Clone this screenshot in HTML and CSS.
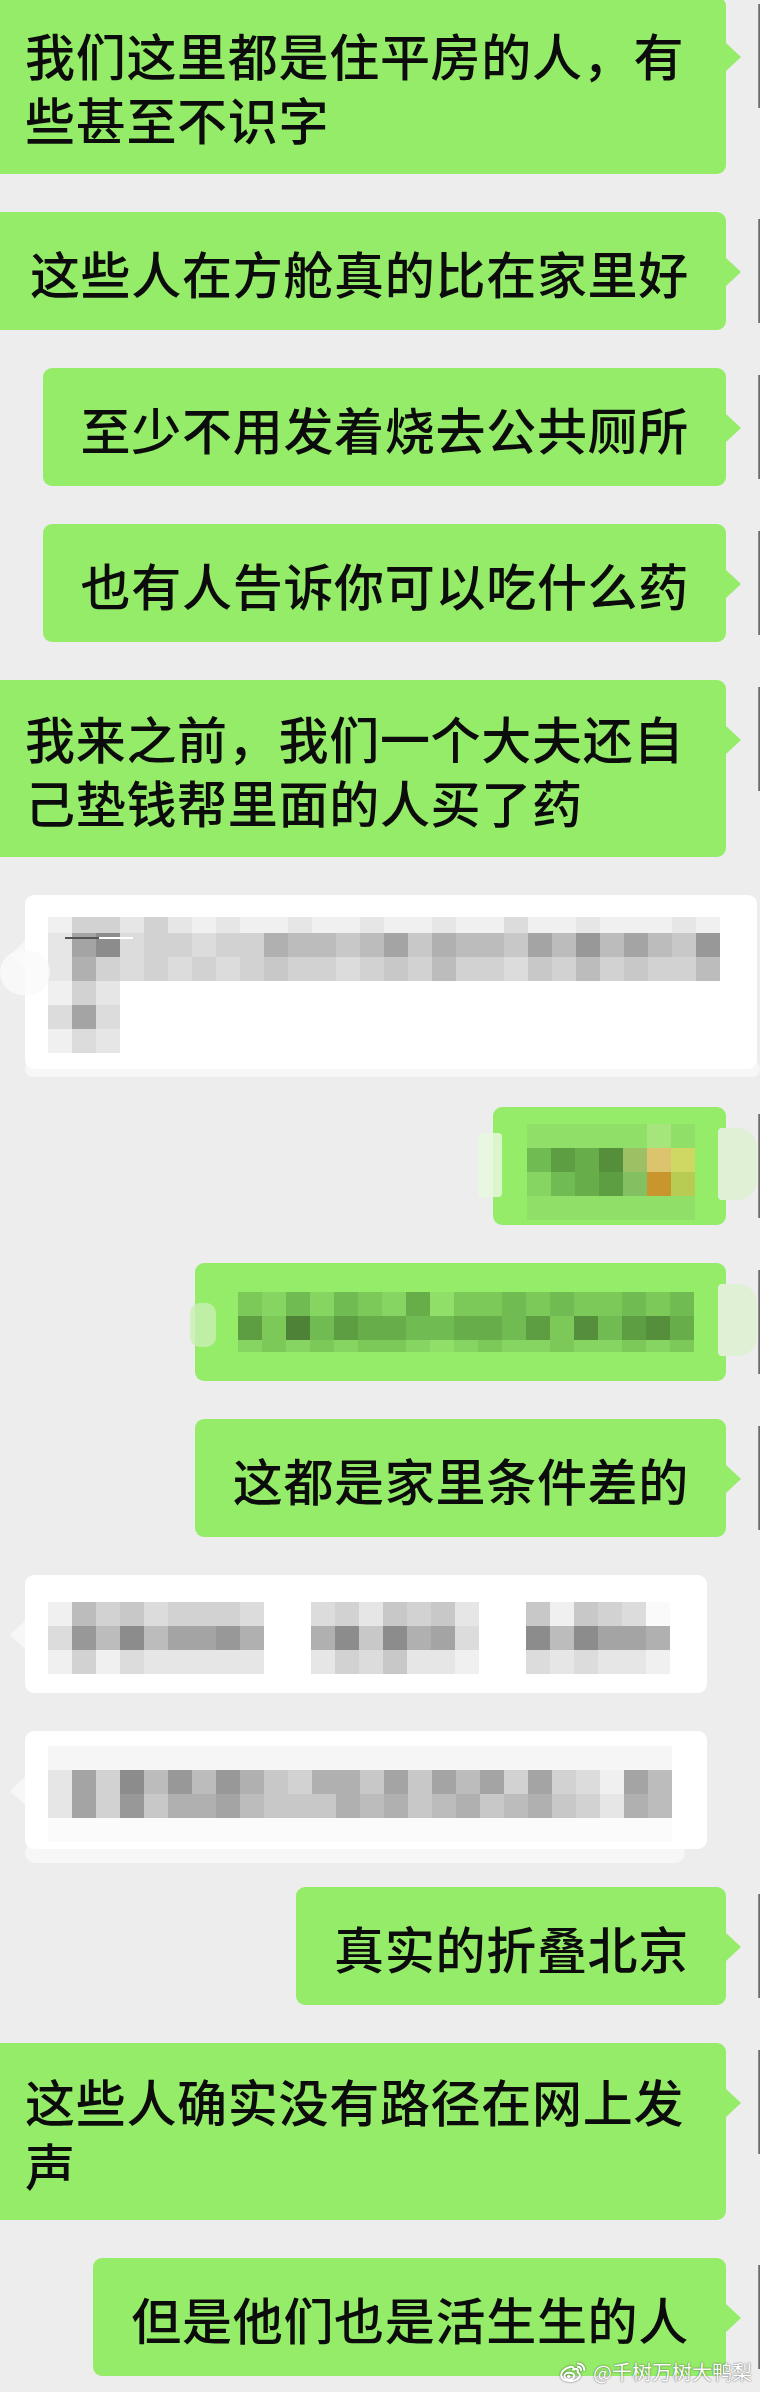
FILE: index.html
```html
<!DOCTYPE html>
<html lang="zh-CN">
<head>
<meta charset="utf-8">
<title>聊天记录</title>
<link rel="stylesheet" href="styles.css">
</head>
<body>
<div class="chat">
  <div class="row me"><div class="bubble green">我们这里都是住平房的人，有些甚至不识字</div><i class="avatar"></i></div>
  <div class="row me"><div class="bubble green">这些人在方舱真的比在家里好</div><i class="avatar"></i></div>
  <div class="row me"><div class="bubble green">至少不用发着烧去公共厕所</div><i class="avatar"></i></div>
  <div class="row me"><div class="bubble green">也有人告诉你可以吃什么药</div><i class="avatar"></i></div>
  <div class="row me"><div class="bubble green">我来之前，我们一个大夫还自己垫钱帮里面的人买了药</div><i class="avatar"></i></div>

  <div class="row them">
    <div class="bubble white mos-b6">
      <div class="mos">
        <div class="r h16"><i class="c1"></i><i class="c4"></i><i class="c4"></i><i class="c2"></i><i class="c4"></i><i class="c2"></i><i class="c1"></i><i class="c2"></i><i class="c1"></i><i class="c1"></i><i class="c2"></i><i class="c1"></i><i class="c1"></i><i class="c2"></i><i class="c1"></i><i class="c1"></i><i class="c2"></i><i class="c1"></i><i class="c1"></i><i class="c3"></i><i class="c1"></i><i class="c1"></i><i class="c2"></i><i class="c1"></i><i class="c1"></i><i class="c1"></i><i class="c2"></i><i class="c1"></i></div>
        <div class="r"><i class="c2"></i><i class="c8"></i><i class="ca"></i><i class="c3"></i><i class="c4"></i><i class="c4"></i><i class="c3"></i><i class="c4"></i><i class="c4"></i><i class="c7"></i><i class="c6"></i><i class="c6"></i><i class="c5"></i><i class="c6"></i><i class="c8"></i><i class="c5"></i><i class="c7"></i><i class="c6"></i><i class="c6"></i><i class="c5"></i><i class="c8"></i><i class="c6"></i><i class="c9"></i><i class="c6"></i><i class="c8"></i><i class="c6"></i><i class="c5"></i><i class="c9"></i></div>
        <div class="r"><i class="c2"></i><i class="c7"></i><i class="c4"></i><i class="c3"></i><i class="c4"></i><i class="c3"></i><i class="c4"></i><i class="c3"></i><i class="c4"></i><i class="c5"></i><i class="c4"></i><i class="c4"></i><i class="c3"></i><i class="c4"></i><i class="c5"></i><i class="c4"></i><i class="c6"></i><i class="c4"></i><i class="c4"></i><i class="c3"></i><i class="c5"></i><i class="c4"></i><i class="c6"></i><i class="c4"></i><i class="c5"></i><i class="c4"></i><i class="c4"></i><i class="c6"></i></div>
        <div class="r"><i class="c1"></i><i class="c4"></i><i class="c2"></i></div>
        <div class="r"><i class="c3"></i><i class="c8"></i><i class="c3"></i></div>
        <div class="r"><i class="c1"></i><i class="c3"></i><i class="c2"></i></div>
      </div>
      <b class="scratch"></b>
      <b class="smudge sm-b6-left"></b>
      <b class="smudge sm-b6-bottom"></b>
    </div>
  </div>

  <div class="row me">
    <div class="bubble green mos-b7">
      <div class="mos">
        <div class="r"><i class="gA"></i><i class="gA"></i><i class="gA"></i><i class="gA"></i><i class="gA"></i><i class="sL3"></i><i class="gA"></i></div>
        <div class="r"><i class="gD"></i><i class="gF"></i><i class="gE"></i><i class="gG"></i><i class="sL1"></i><i class="sY1"></i><i class="sY2"></i></div>
        <div class="r"><i class="gB"></i><i class="gD"></i><i class="gE"></i><i class="gF"></i><i class="sL2"></i><i class="sO"></i><i class="sY3"></i></div>
        <div class="r"><i class="gA"></i><i class="gA"></i><i class="gA"></i><i class="gA"></i><i class="gA"></i><i class="gA"></i><i class="gA"></i></div>
      </div>
      <b class="smudge sm-b7-left"></b>
      <b class="smudge sm-right"></b>
    </div>
    <i class="avatar"></i>
  </div>

  <div class="row me">
    <div class="bubble green mos-b8">
      <div class="mos">
        <div class="r"><i class="gC"></i><i class="gB"></i><i class="gD"></i><i class="gB"></i><i class="gD"></i><i class="gC"></i><i class="gB"></i><i class="gE"></i><i class="gA"></i><i class="gC"></i><i class="gC"></i><i class="gD"></i><i class="gC"></i><i class="gD"></i><i class="gC"></i><i class="gC"></i><i class="gD"></i><i class="gC"></i><i class="gD"></i></div>
        <div class="r"><i class="gF"></i><i class="gC"></i><i class="gH"></i><i class="gD"></i><i class="gF"></i><i class="gE"></i><i class="gE"></i><i class="gD"></i><i class="gD"></i><i class="gE"></i><i class="gE"></i><i class="gD"></i><i class="gF"></i><i class="gC"></i><i class="gG"></i><i class="gD"></i><i class="gF"></i><i class="gG"></i><i class="gE"></i></div>
        <div class="r h12"><i class="gB"></i><i class="gC"></i><i class="gB"></i><i class="gC"></i><i class="gB"></i><i class="gC"></i><i class="gC"></i><i class="gB"></i><i class="gA"></i><i class="gB"></i><i class="gC"></i><i class="gB"></i><i class="gB"></i><i class="gC"></i><i class="gB"></i><i class="gB"></i><i class="gC"></i><i class="gB"></i><i class="gC"></i></div>
      </div>
      <b class="smudge sm-b8-left"></b>
      <b class="smudge sm-right"></b>
    </div>
    <i class="avatar"></i>
  </div>

  <div class="row me"><div class="bubble green">这都是家里条件差的</div><i class="avatar"></i></div>

  <div class="row them">
    <div class="bubble white mos-b10">
      <div class="groups">
        <div class="mos">
          <div class="r"><i class="c1"></i><i class="c6"></i><i class="c4"></i><i class="c5"></i><i class="c3"></i><i class="c4"></i><i class="c4"></i><i class="c4"></i><i class="c3"></i></div>
          <div class="r"><i class="c3"></i><i class="c9"></i><i class="c6"></i><i class="ca"></i><i class="c6"></i><i class="c8"></i><i class="c8"></i><i class="c9"></i><i class="c7"></i></div>
          <div class="r"><i class="c1"></i><i class="c4"></i><i class="c1"></i><i class="c3"></i><i class="c2"></i><i class="c2"></i><i class="c2"></i><i class="c2"></i><i class="c2"></i></div>
        </div>
        <div class="mos">
          <div class="r"><i class="c3"></i><i class="c4"></i><i class="c2"></i><i class="c5"></i><i class="c4"></i><i class="c5"></i><i class="c2"></i></div>
          <div class="r"><i class="c7"></i><i class="ca"></i><i class="c5"></i><i class="ca"></i><i class="c7"></i><i class="c8"></i><i class="c3"></i></div>
          <div class="r"><i class="c2"></i><i class="c4"></i><i class="c3"></i><i class="c5"></i><i class="c2"></i><i class="c2"></i><i class="c1"></i></div>
        </div>
        <div class="mos">
          <div class="r"><i class="c5"></i><i class="c1"></i><i class="c5"></i><i class="c4"></i><i class="c3"></i><i class="c0"></i></div>
          <div class="r"><i class="ca"></i><i class="c6"></i><i class="ca"></i><i class="c8"></i><i class="c8"></i><i class="c7"></i></div>
          <div class="r"><i class="c3"></i><i class="c2"></i><i class="c3"></i><i class="c2"></i><i class="c2"></i><i class="c1"></i></div>
        </div>
      </div>
    </div>
  </div>

  <div class="row them">
    <div class="bubble white mos-b11">
      <div class="mos">
        <div class="band"></div>
        <div class="r"><i class="c2"></i><i class="c8"></i><i class="c4"></i><i class="ca"></i><i class="c6"></i><i class="c9"></i><i class="c6"></i><i class="c9"></i><i class="c7"></i><i class="c5"></i><i class="c4"></i><i class="c7"></i><i class="c7"></i><i class="c5"></i><i class="c8"></i><i class="c5"></i><i class="c8"></i><i class="c6"></i><i class="c8"></i><i class="c4"></i><i class="c8"></i><i class="c4"></i><i class="c3"></i><i class="c1"></i><i class="c8"></i><i class="c6"></i></div>
        <div class="r"><i class="c2"></i><i class="c8"></i><i class="c4"></i><i class="c9"></i><i class="c5"></i><i class="c7"></i><i class="c7"></i><i class="c8"></i><i class="c6"></i><i class="c5"></i><i class="c5"></i><i class="c5"></i><i class="c7"></i><i class="c6"></i><i class="c7"></i><i class="c5"></i><i class="c6"></i><i class="c7"></i><i class="c5"></i><i class="c6"></i><i class="c7"></i><i class="c5"></i><i class="c4"></i><i class="c2"></i><i class="c7"></i><i class="c6"></i></div>
        <div class="band faint"></div>
      </div>
      <b class="smudge sm-b11-bottom"></b>
    </div>
  </div>

  <div class="row me"><div class="bubble green">真实的折叠北京</div><i class="avatar"></i></div>
  <div class="row me"><div class="bubble green">这些人确实没有路径在网上发声</div><i class="avatar"></i></div>
  <div class="row me"><div class="bubble green">但是他们也是活生生的人</div><i class="avatar"></i></div>
</div>

<div class="watermark">
  <svg class="weibo" width="28" height="22" viewBox="0 0 30 24" aria-hidden="true">
    <g fill="none" stroke="#fff" stroke-width="2.2" stroke-linecap="round" stroke-linejoin="round">
      <path d="M12 6.5C6.5 7.5 1.5 12 2.2 16.2C3 21 10 23 16.2 21.2C22 19.4 24 15.4 21.2 13.3C20.3 12.7 19.8 12.2 20.2 10.8C20.7 8.8 18.2 8 15.2 9.4C16.2 6.8 14.6 6 12 6.5Z"/>
      <ellipse cx="11" cy="16.4" rx="5.4" ry="3.7"/>
      <path d="M20.5 2.8A7 7 0 0 1 27.4 9.8"/>
      <path d="M20.4 6.4A3.4 3.4 0 0 1 23.8 9.8"/>
    </g>
    <circle cx="10.2" cy="16.8" r="1.7" fill="#fff"/>
  </svg>
  <span>@千树万树大鸭梨</span>
</div>
</body>
</html>
```

FILE: styles.css
```css
html, body {
  margin: 0;
  padding: 0;
}

body {
  position: relative;
  width: 760px;
  height: 2392px;
  overflow: hidden;
  background: #ededed;
  font-family: "Noto Sans CJK SC", "Noto Sans", sans-serif;
}

.chat {
  display: flex;
  flex-direction: column;
  gap: 38px;
  width: 773px;
  margin: -3px 0 0 -13px;
}

.row {
  display: flex;
  align-items: flex-start;
}

.row.me {
  justify-content: flex-end;
}

.row.them {
  justify-content: flex-start;
  padding-left: 38px;
}

.avatar {
  flex: none;
  width: 2px;
  height: 104px;
  margin: 7px 0 0 32px;
  background: linear-gradient(90deg, #9a9a9a, #5e5e5e);
}

.bubble {
  position: relative;
  box-sizing: border-box;
  min-height: 118px;
  border-radius: 9px;
}

.green {
  display: flex;
  align-items: center;
  padding: 25px 37px 24px 38px;
  background: #95ec69;
  color: #0c0c0c;
  font-size: 50px;
  font-weight: 500;
  line-height: 64px;
  letter-spacing: 0.7px;
}

.green::after {
  content: "";
  position: absolute;
  right: -15px;
  top: 46px;
  border-left: 15px solid #95ec69;
  border-top: 14px solid transparent;
  border-bottom: 14px solid transparent;
}

.white {
  background: #ffffff;
}

.white::before {
  content: "";
  position: absolute;
  left: -15px;
  top: 46px;
  border-right: 15px solid #f7f7f7;
  border-top: 14px solid transparent;
  border-bottom: 14px solid transparent;
}

/* mosaic blocks */
.mos {
  display: flex;
  flex-direction: column;
}

.mos .r {
  display: flex;
}

.mos i {
  flex: none;
  width: 24px;
  height: 24px;
}

.mos .r.h16 i { height: 16px; }
.mos .r.h12 i { height: 12px; }

.band {
  height: 24px;
  background: #f6f6f6;
}

.band.faint {
  background: #fbfbfb;
}

.c0 { background: #fafafa; }
.c1 { background: #f0f0f0; }
.c2 { background: #e6e6e6; }
.c3 { background: #dcdcdc; }
.c4 { background: #d2d2d2; }
.c5 { background: #c8c8c8; }
.c6 { background: #bcbcbc; }
.c7 { background: #b0b0b0; }
.c8 { background: #a4a4a4; }
.c9 { background: #989898; }
.ca { background: #8c8c8c; }

.gA { background: #8fdf68; }
.gB { background: #86d462; }
.gC { background: #7cc95a; }
.gD { background: #70bc53; }
.gE { background: #67ae4a; }
.gF { background: #5d9e42; }
.gG { background: #558f3c; }
.gH { background: #4d8237; }
.sY1 { background: #dcc46f; }
.sY2 { background: #cfd862; }
.sO  { background: #c9962e; }
.sY3 { background: #b8cb52; }
.sL1 { background: #9cc063; }
.sL2 { background: #82c062; }
.sL3 { background: #a6e47c; }

/* mosaic bubble geometry */
.mos-b6 {
  width: 732px;
  height: 174px;
  padding: 22px 0 0 23px;
}

.mos-b7 {
  display: block;
  width: 233px;
  height: 118px;
  padding: 17px 0 0 34px;
}

.mos-b8 {
  display: block;
  width: 531px;
  height: 118px;
  padding: 29px 0 0 43px;
}

.mos-b10 {
  width: 682px;
  height: 118px;
  padding: 27px 0 0 23px;
}

.mos-b10 .groups {
  display: flex;
  gap: 47px;
}

.mos-b11 {
  width: 682px;
  height: 118px;
  padding: 15px 0 0 23px;
}

.mos-b11 .band {
  width: 624px;
}

/* retouch smudges and scratches lying over the bubbles */
.smudge {
  position: absolute;
  z-index: 1;
  border-radius: 14px;
  background: rgba(255, 255, 255, 0.5);
}

.sm-b6-left {
  left: -25px;
  top: 55px;
  width: 50px;
  height: 45px;
  background: rgba(250, 250, 250, 0.8);
  border-radius: 24px;
}

.sm-b6-bottom {
  left: 0;
  top: 166px;
  width: 735px;
  height: 16px;
  border-radius: 8px;
  background: rgba(255, 255, 255, 0.55);
}

.sm-b7-left {
  left: -15px;
  top: 26px;
  width: 24px;
  height: 64px;
  border-radius: 4px;
  background: rgba(230, 248, 220, 0.85);
}

.sm-b8-left {
  left: -5px;
  top: 40px;
  width: 26px;
  height: 44px;
  border-radius: 10px;
  background: rgba(200, 240, 180, 0.8);
}

.sm-right {
  right: -31px;
  top: 21px;
  width: 39px;
  height: 72px;
  border-radius: 4px 20px 20px 4px;
  background: #dff0d4;
}

.sm-b11-bottom {
  left: 0;
  top: 112px;
  width: 660px;
  height: 20px;
  border-radius: 10px;
  background: rgba(255, 255, 255, 0.55);
}

.scratch {
  position: absolute;
  left: 40px;
  top: 42px;
  width: 68px;
  height: 2px;
  background: linear-gradient(90deg, #555 0 50%, #fff 50% 100%);
}

/* watermark */
.watermark {
  position: absolute;
  right: 8px;
  bottom: 8px;
  display: flex;
  align-items: center;
  gap: 6px;
  color: #ffffff;
  font-family: "Noto Sans CJK SC", "Noto Sans", sans-serif;
  font-size: 20px;
  line-height: 24px;
  text-shadow: 0 0 2px rgba(0, 0, 0, 0.45), 0 0 1px rgba(0, 0, 0, 0.4);
}

.weibo {
  display: block;
  filter: drop-shadow(0 0 1px rgba(0, 0, 0, 0.55));
}
```
